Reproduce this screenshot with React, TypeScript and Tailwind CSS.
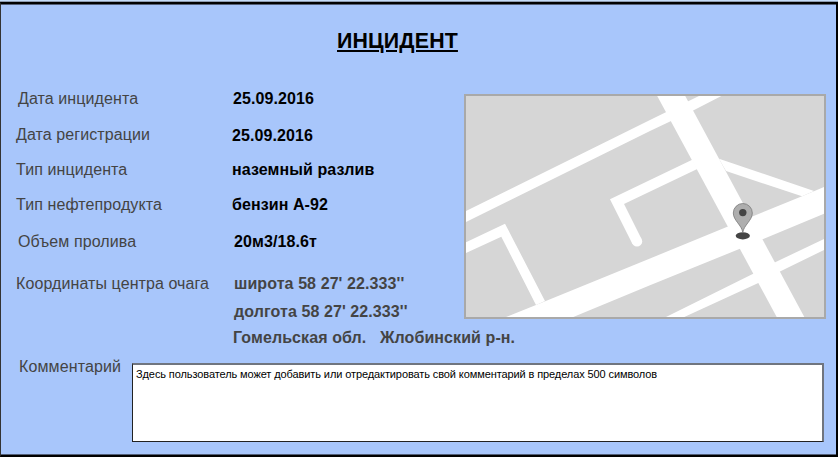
import type { ReactNode } from "react";

type RowProps = {
  label: string;
  row: string;
  labelBox: string;
  children: ReactNode;
};

function Row({ label, row, labelBox, children }: RowProps) {
  return (
    <div className={`flex items-start whitespace-pre ${row}`}>
      <dt className={`shrink-0 text-[#444444] ${labelBox}`}>{label}</dt>
      <dd className="font-bold">{children}</dd>
    </div>
  );
}

function LocationMap() {
  return (
    <svg viewBox="464 94 362 225" className="block h-[225px] w-[362px] shrink-0">
      <rect x="465" y="95" width="360" height="223" fill="#d6d6d6" />
      <g fill="#ffffff">
        <path d="M656.7 95H684.7L804.3 317H776.7Z" />
        <path d="M466 211L650 120L701 95H723.3L692.7 110.7L650 131L466 222Z" />
        <path d="M506 317L536 305L650 258.5L727.3 226.7L802 196.3L824 187V213.7L763.3 239L739.3 249L650 285.3L573.3 317Z" />
        <path d="M719 158.7L814 191L802 196.3L726 171Z" />
        <path d="M466 242.3L505 223.7L545 301L536 305L501.3 236.7L466 253Z" />
        <path d="M666 317L752.7 274L775.7 262L824 239V250L781 271L758.3 283L684.3 317Z" />
      </g>
      <path d="M637 241.5L617 201.6L695 164.2" fill="none" stroke="#ffffff" strokeWidth="10.4" />
      <circle cx="637" cy="241.4" r="5.2" fill="#ffffff" />
      <rect x="465" y="95" width="360" height="223" fill="none" stroke="#a9a9a9" strokeWidth="2" />
      <ellipse cx="742.8" cy="235.8" rx="7.1" ry="3.6" fill="#444444" />
      <path
        d="M742.8 232.5C741.8 225 733.3 220.5 733.3 213A9.5 9.5 0 0 1 752.3 213C752.3 220.5 743.8 225 742.8 232.5Z"
        fill="#aeaeae"
        stroke="#777777"
        strokeWidth="0.8"
      />
      <circle cx="742.8" cy="212.6" r="3.7" fill="#444444" />
    </svg>
  );
}

export default function App() {
  return (
    <div className="h-[457px] w-[838px] overflow-hidden bg-[#c5dcf8] font-['Liberation_Sans',Arial,sans-serif] text-black">
      <div className="h-px" />
      <div className="h-px bg-[#8d9bb0]" />
      <main className="h-[455px] border-t-2 border-r-2 border-b-2 border-l border-t-black border-r-black border-b-black border-l-[#333333] bg-[#a8c6fb]">
        <div className="flex h-[451px] flex-col border-y border-[#535f78]">
          <h1 className="h-[89px] pt-[23px] pl-[336px] text-[21.33px] leading-[26px] font-bold tracking-[0.18px] underline">
            ИНЦИДЕНТ
          </h1>
          <div className="flex h-[264px]">
            <dl className="w-[463px] shrink-0 text-[16px] leading-[18px] tracking-[0.09px]">
              <Row label="Дата инцидента" row="h-[32px] pl-[17px] pt-px -mt-[5px]" labelBox="w-[215px]">25.09.2016</Row>
              <Row label="Дата регистрации" row="h-[35px] pl-[15px] mt-[5px]" labelBox="w-[216px]">
                <div className="pt-px">25.09.2016</div>
              </Row>
              <Row label="Тип инцидента" row="h-[35px] pl-[15px]" labelBox="w-[216px]">наземный разлив</Row>
              <Row label="Тип нефтепродукта" row="h-[37px] pl-[15px]" labelBox="w-[216px]">бензин А-92</Row>
              <Row label="Объем пролива" row="h-[42px] pl-[17px]" labelBox="w-[216px]">20м3/18.6т</Row>
              <Row label="Координаты центра очага" row="h-[78px] pl-[15px]" labelBox="w-[217px]">
                <div className="text-[#444444]">
                  <div className="h-[28px] pl-px">широта 58 27' 22.333''</div>
                  <div className="h-[26px] pl-px">долгота 58 27' 22.333''</div>
                  <div className="h-[18px]">Гомельская обл.   Жлобинский р-н.</div>
                </div>
              </Row>
            </dl>
            <LocationMap />
          </div>
          <div className="flex items-start">
            <label htmlFor="comment" className="w-[131px] shrink-0 pl-[18px] text-[16px] leading-[18px] tracking-[0.12px] text-[#444444]">
              Комментарий
            </label>
            <textarea
              id="comment"
              className="mt-[5px] h-[79px] w-[692px] resize-none border-t-2 border-r-2 border-b border-l border-t-[#70757f] border-r-[#70757f] border-b-[#222222] border-l-[#222222] bg-white px-[3px] pt-[2px] text-[11px] leading-[14px] tracking-[-0.1px] outline-none"
              defaultValue="Здесь пользователь может добавить или отредактировать свой комментарий в пределах 500 символов"
            />
          </div>
        </div>
      </main>
    </div>
  );
}
